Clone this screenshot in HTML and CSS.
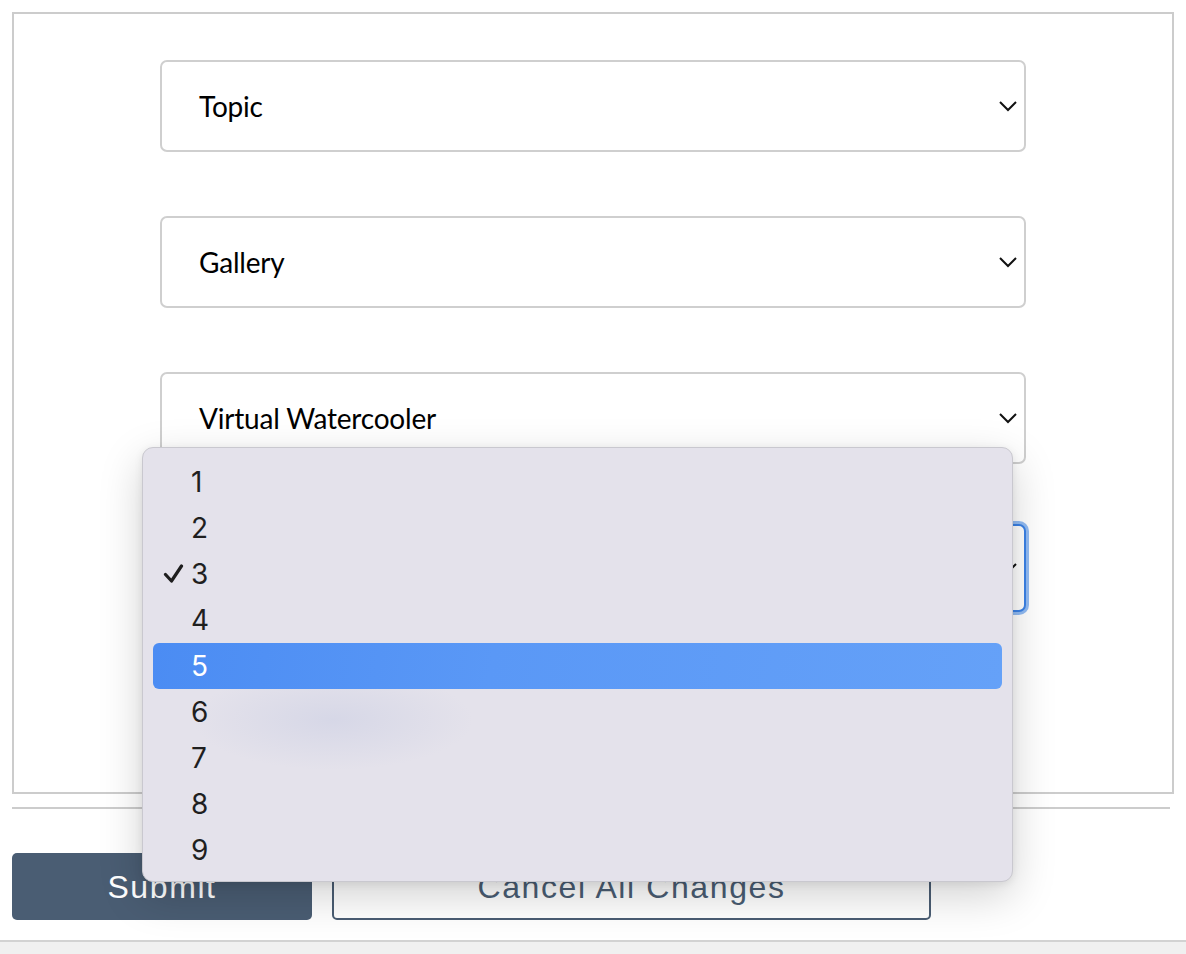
FILE: index.html
```html
<!DOCTYPE html>
<html lang="en">
<head>
<meta charset="utf-8">
<title>Form</title>
<link rel="stylesheet" href="styles.css">
</head>
<body>
<div class="page">
  <div class="box">
    <div class="select"><span class="label">Topic</span><svg class="chev" width="20" height="12" viewBox="0 0 20 12"><path d="M2 2 L10 10 L18 2" fill="none" stroke="#111" stroke-width="2"/></svg></div>
    <div class="select"><span class="label">Gallery</span><svg class="chev" width="20" height="12" viewBox="0 0 20 12"><path d="M2 2 L10 10 L18 2" fill="none" stroke="#111" stroke-width="2"/></svg></div>
    <div class="select"><span class="label">Virtual Watercooler</span><svg class="chev" width="20" height="12" viewBox="0 0 20 12"><path d="M2 2 L10 10 L18 2" fill="none" stroke="#111" stroke-width="2"/></svg></div>
    <div class="select focused"><span class="label"></span><svg class="chev" width="20" height="12" viewBox="0 0 20 12"><path d="M2 2 L10 10 L18 2" fill="none" stroke="#111" stroke-width="2"/></svg></div>
  </div>
  <hr class="rule">
  <div class="actions">
    <button class="btn primary">Submit</button>
    <button class="btn secondary">Cancel All Changes</button>
  </div>
</div>
<div class="footer"></div>

<div class="menu">
  <div class="item"><span class="check"></span><span>1</span></div>
  <div class="item"><span class="check"></span><span>2</span></div>
  <div class="item"><span class="check"><svg width="21" height="20" viewBox="0 0 21 20"><path d="M2.5 10.5 L8.5 17 L18.5 2" fill="none" stroke="#1e1e1e" stroke-width="3.2" stroke-linecap="round" stroke-linejoin="round"/></svg></span><span>3</span></div>
  <div class="item"><span class="check"></span><span>4</span></div>
  <div class="item active"><span class="check"></span><span>5</span></div>
  <div class="item"><span class="check"></span><span>6</span></div>
  <div class="item"><span class="check"></span><span>7</span></div>
  <div class="item"><span class="check"></span><span>8</span></div>
  <div class="item"><span class="check"></span><span>9</span></div>
</div>
</body>
</html>
```

FILE: styles.css
```css
html, body {
  margin: 0;
  padding: 0;
  background: #ffffff;
}
body {
  position: relative;
  height: 954px;
  overflow: hidden;
  font-family: "Lato", "Liberation Sans", sans-serif;
}
.page {
  padding: 12px 12px 0 12px;
}
.box {
  width: 1162px;
  height: 782px;
  box-sizing: border-box;
  border: 2px solid #cccccc;
  padding-top: 46px;
  display: flex;
  flex-direction: column;
  align-items: center;
  gap: 64px;
}
.select {
  width: 866px;
  height: 92px;
  box-sizing: border-box;
  border: 2px solid #cfcfcf;
  border-radius: 7px;
  display: flex;
  align-items: center;
  justify-content: space-between;
  padding: 0 6px 0 37px;
  background: #fff;
  flex: none;
}
.select.focused {
  border-color: #3b82e6;
  box-shadow: 0 0 0 3px rgba(110, 165, 240, 0.75);
  height: 88px;
  margin-top: -4px;
}
.label {
  font-size: 28px;
  color: #000;
  letter-spacing: -0.2px;
}
.chev {
  display: block;
}
.rule {
  margin: 13px 0 0 0;
  width: 1158px;
  border: 0;
  border-top: 2px solid #cccccc;
  height: 0;
}
.actions {
  display: flex;
  gap: 20px;
  margin-top: 44px;
}
.btn {
  height: 67px;
  border-radius: 5px;
  font-family: "Liberation Sans", Arial, sans-serif;
  font-size: 32px;
  letter-spacing: 1.6px;
  display: flex;
  align-items: center;
  justify-content: center;
  padding: 0;
  padding-top: 2px;
  box-sizing: border-box;
}
.primary {
  width: 300px;
  background: #4a5d73;
  color: #ffffff;
  border: none;
}
.secondary {
  width: 599px;
  background: #ffffff;
  color: #4a5d73;
  border: 2px solid #4a5d73;
}
.footer {
  position: absolute;
  left: 0;
  right: 0;
  top: 940px;
  height: 14px;
  background: #f0f0f0;
  border-top: 2px solid #d2d2d2;
}
.menu {
  position: absolute;
  left: 142px;
  top: 447px;
  width: 871px;
  height: 435px;
  box-sizing: border-box;
  padding: 11px 10px 10px 10px;
  border-radius: 11px;
  background:
    radial-gradient(ellipse 140px 50px at 190px 272px, rgba(205, 208, 228, 0.6), rgba(205, 208, 228, 0) 100%),
    #e4e2eb;
  border: 1px solid #c9c8cf;
  box-shadow: 0 14px 44px rgba(0, 0, 0, 0.18), 0 2px 8px rgba(0, 0, 0, 0.08);
  font-family: "Inter", "Liberation Sans", sans-serif;
}
.item {
  height: 46px;
  display: flex;
  align-items: center;
  font-size: 28px;
  color: #1f1f1f;
  border-radius: 6px;
}
.check {
  width: 38px;
  padding-left: 10px;
  box-sizing: border-box;
  display: flex;
  align-items: center;
}
.check svg {
  display: block;
}
.item.active {
  background: linear-gradient(100deg, #4b8cf3 0%, #5a98f6 40%, #65a1f8 100%);
  color: #ffffff;
}
```
